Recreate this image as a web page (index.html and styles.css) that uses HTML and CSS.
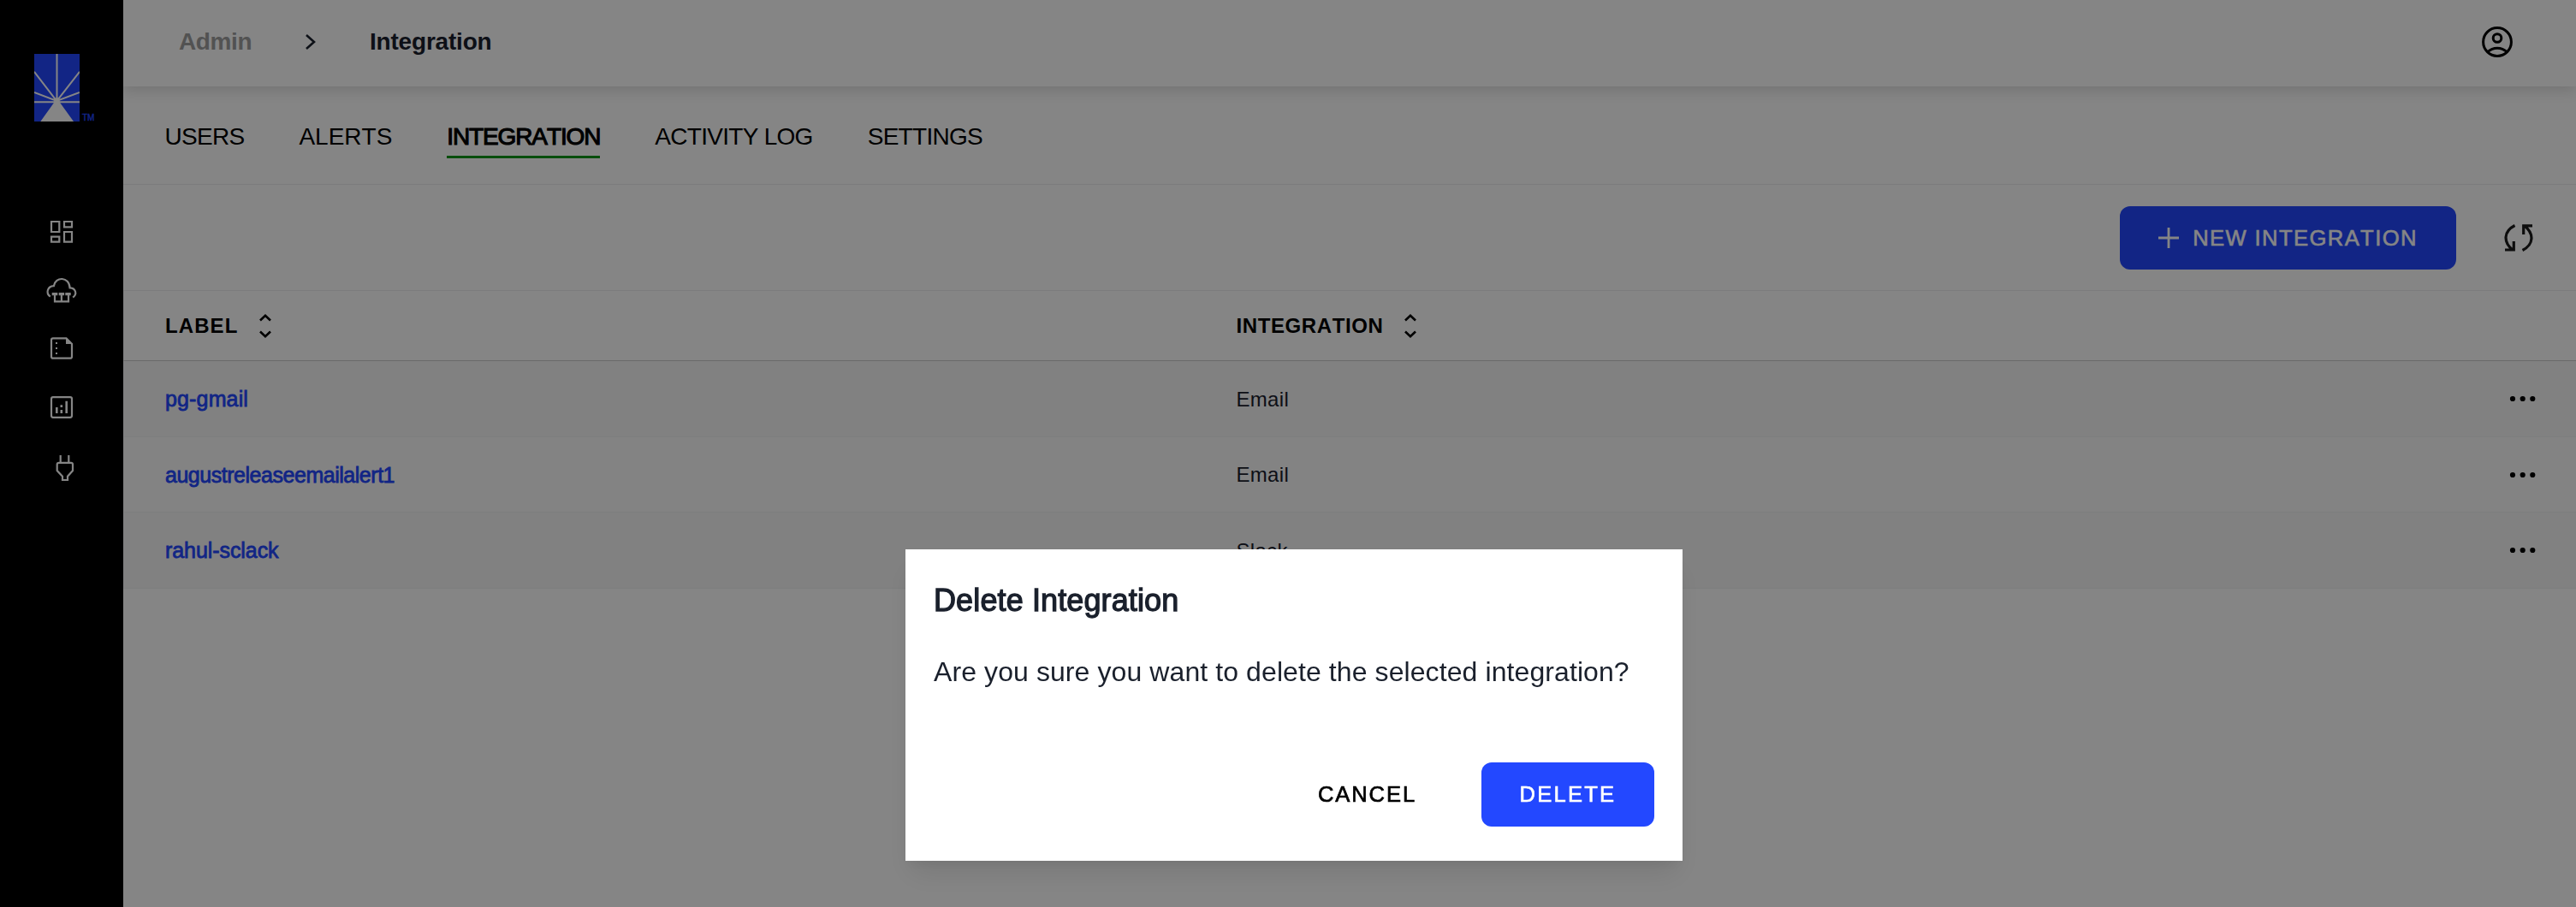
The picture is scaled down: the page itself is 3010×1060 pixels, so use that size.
FILE: index.html
```html
<!DOCTYPE html>
<html lang="en">
<head>
<meta charset="utf-8">
<title>Integration</title>
<link rel="stylesheet" href="styles.css">
</head>
<body>
<div class="app">
  <aside class="sidebar">
    <div class="logo">
      <svg width="53" height="79" viewBox="0 0 53 79">
        <rect width="53" height="79" fill="#2348ff"/>
        <g stroke="#fff" stroke-width="2" fill="none">
          <path d="M26.5 0V55M0 20.8L26.3 55L53 20.8M0 45L26.3 55L53 45M0 56.3H53"/>
        </g>
        <path d="M24 52L26.5 51L28.8 52L30.5 57.5L46 79H7.3L22.7 57.5Z" fill="#fff"/>
      </svg>
      <span class="logo-mark">TM</span>
    </div>
    <nav class="side-nav">
      <svg class="nav-icon" viewBox="0 0 68 68"><path d="M22 22h9.3v12H22zM37 22h9v6.3h-9zM22 39.7h9.3v6H22zM37 34h9v11.7h-9z"/></svg>
      <svg class="nav-icon" viewBox="0 0 68 68"><path d="M20.8 41.7C15 37.5 17.5 29.6 24.9 29.2C26.5 17.8 43 18 43.6 31.4C50.5 31.7 52.5 38.5 47.2 42.6M26 39V47.3H42V39M33.9 39V47"/><path class="solid" d="M22.7 37h6.6v3.2h-6.6zM30.7 37h6.4v3.2h-6.4zM38.3 37h6.4v3.2h-6.4z"/></svg>
      <svg class="nav-icon" viewBox="0 0 68 68"><path d="M24 22.3H39.5L46 29V43.7Q46 45.7 44 45.7H24Q22 45.7 22 43.7V24.3Q22 22.3 24 22.3Z"/><path class="solid" d="M39 22v7h7zM27 27h2v2h-2zM27 33h2v2h-2zM27 39h2v2h-2z"/></svg>
      <svg class="nav-icon" viewBox="0 0 68 68"><rect x="22" y="23.2" width="24" height="23.6" rx="2"/><path class="solid" d="M27 35h2.6v7H27zM32.5 32.3h2.6v2.6h-2.6zM32.5 38h2.6v4h-2.6zM38.4 27.7H41V42h-2.6z"/></svg>
      <svg class="nav-icon" viewBox="0 0 68 68"><path d="M32.7 23v8.8M42.3 23v8.8M31 31.8H45Q47 31.8 47 33.8V41L41 47.7V52H35V47.7L28.7 41V33.8Q28.7 31.8 31 31.8Z"/></svg>
    </nav>
  </aside>

  <main class="main">
    <header class="topbar">
      <div class="crumbs">
        <span class="crumb crumb-parent">Admin</span>
        <svg class="crumb-sep" width="12" height="18" viewBox="0 0 12 18"><path d="M1 1L10 9L1 17"/></svg>
        <span class="crumb crumb-current">Integration</span>
      </div>
      <svg class="user" width="36" height="36" viewBox="0 0 36 36"><circle cx="18" cy="18" r="16.4"/><circle cx="18" cy="13.5" r="4.8"/><path d="M7 29.5C13 23.8 23 23.8 29 29.5"/></svg>
    </header>

    <nav class="tabs">
      <a class="tab">USERS</a>
      <a class="tab tab-alerts">ALERTS</a>
      <a class="tab tab-active">INTEGRATION</a>
      <a class="tab">ACTIVITY LOG</a>
      <a class="tab">SETTINGS</a>
    </nav>

    <div class="toolbar">
      <button class="btn btn-primary btn-new">
        <svg width="24" height="24" viewBox="0 0 24 24"><path d="M12 0V24M0 12H24"/></svg>
        <span>NEW INTEGRATION</span>
      </button>
      <svg class="refresh" width="34" height="34" viewBox="0 0 34 34"><path d="M12.5 2.5C-1 9.5 -1 22 10 31M1 31H11.3V21M21.5 31.5C35 24.5 35 12 24 3M33 2.8H22.7V13"/></svg>
    </div>

    <section class="table">
      <div class="row row-head">
        <div class="cell cell-label">LABEL<svg class="sort" width="14" height="28" viewBox="0 0 14 28"><path d="M1 7.5L7 1.8L13 7.5M1 20.5L7 26.2L13 20.5"/></svg></div>
        <div class="cell cell-type">INTEGRATION<svg class="sort" width="14" height="28" viewBox="0 0 14 28"><path d="M1 7.5L7 1.8L13 7.5M1 20.5L7 26.2L13 20.5"/></svg></div>
      </div>
      <div class="row row-odd">
        <div class="cell"><a class="link">pg-gmail</a></div>
        <div class="cell">Email</div>
        <svg class="more" width="32" height="8" viewBox="0 0 32 8"><circle cx="4" cy="4" r="3.1"/><circle cx="15.7" cy="4" r="3.1"/><circle cx="27.3" cy="4" r="3.1"/></svg>
      </div>
      <div class="row row-even">
        <div class="cell"><a class="link link-long">augustreleaseemailalert1</a></div>
        <div class="cell">Email</div>
        <svg class="more" width="32" height="8" viewBox="0 0 32 8"><circle cx="4" cy="4" r="3.1"/><circle cx="15.7" cy="4" r="3.1"/><circle cx="27.3" cy="4" r="3.1"/></svg>
      </div>
      <div class="row row-odd">
        <div class="cell"><a class="link link-mid">rahul-sclack</a></div>
        <div class="cell">Slack</div>
        <svg class="more" width="32" height="8" viewBox="0 0 32 8"><circle cx="4" cy="4" r="3.1"/><circle cx="15.7" cy="4" r="3.1"/><circle cx="27.3" cy="4" r="3.1"/></svg>
      </div>
    </section>
  </main>
</div>

<div class="overlay">
  <div class="modal" role="dialog">
    <h2 class="modal-title">Delete Integration</h2>
    <p class="modal-text">Are you sure you want to delete the selected integration?</p>
    <div class="modal-actions">
      <button class="btn btn-ghost">CANCEL</button>
      <button class="btn btn-primary btn-delete">DELETE</button>
    </div>
  </div>
</div>
</body>
</html>
```
FILE: styles.css
```css
* { box-sizing: border-box; }

body {
  margin: 0;
  overflow: hidden;
  background: #fff;
  color: #1a202c;
  font-family: "Liberation Sans", Arial, sans-serif;
  font-kerning: none;
}

.app { display: flex; height: 1060px; }

/* Sidebar */
.sidebar { flex: 0 0 144px; background: #000; padding-top: 62.5px; }
.logo { display: flex; align-items: flex-end; gap: 3px; height: 79px; margin-left: 40px; }
.logo-mark { color: #2348ff; font-size: 10px; line-height: 8px; -webkit-text-stroke: .4px #2348ff; }
.side-nav { display: flex; flex-direction: column; margin: 95.5px 0 0 38px; }
.nav-icon { width: 68px; height: 68px; fill: none; stroke: #fff; stroke-width: 2.2; }
.nav-icon .solid { fill: #fff; stroke: none; }

/* Top bar */
.main { flex: 1; min-width: 0; }
.topbar {
  display: flex;
  align-items: center;
  justify-content: space-between;
  height: 101px;
  padding: 0 74px 4px 65px;
  box-shadow: 0 6px 14px rgba(0, 0, 0, .12);
}
.crumbs { display: flex; align-items: center; }
.crumb { font-size: 28px; font-weight: 700; line-height: 34px; }
.crumb-parent { width: 148px; color: #9e9e9e; letter-spacing: -.4px; }
.crumb-current { margin-left: 63px; letter-spacing: -.2px; }
.crumb-sep { fill: none; stroke: #1a202c; stroke-width: 2.6; }
.user { fill: none; stroke: #000; stroke-width: 3; }

/* Tabs */
.tabs {
  display: flex;
  align-items: flex-start;
  gap: 64px;
  height: 115px;
  padding: 36px 0 0 48.5px;
  border-bottom: 1px solid #edeeef;
}
.tab { color: #000; font-size: 28px; line-height: 45px; letter-spacing: -.71px; border-bottom: 3px solid transparent; }
.tab-alerts { letter-spacing: 0; }
.tab-active { letter-spacing: -1.13px; border-color: #109618; -webkit-text-stroke: 1.1px #000; }

/* Toolbar */
.toolbar {
  display: flex;
  align-items: center;
  justify-content: flex-end;
  gap: 56px;
  height: 124px;
  padding: 1px 50px 0 0;
  border-bottom: 1px solid #edeeef;
}
.btn {
  display: flex;
  align-items: center;
  justify-content: center;
  padding: 0;
  border: 0;
  border-radius: 12px;
  font: 25.6px "Liberation Sans", Arial, sans-serif;
  font-kerning: none;
}
.btn-primary { background: #2348ff; color: #fff; -webkit-text-stroke: .6px #fff; }
.btn-new { width: 393px; height: 74px; letter-spacing: 1.4px; gap: 16px; }
.btn-new svg { stroke: #fff; stroke-width: 2.8; }
.refresh { fill: none; stroke: #1a1a1a; stroke-width: 3.2; }

/* Table */
.row {
  display: grid;
  grid-template-columns: 1251.5px 1fr auto;
  align-items: center;
  height: 89px;
  padding: 0 46px 0 48px;
  border-left: 1px solid #f3f4f5;
  border-bottom: 1px solid #f0f1f2;
  font-size: 24px;
}
.cell { display: flex; align-items: center; padding-top: 1px; letter-spacing: .3px; }
.row-head { height: 82px; border-bottom-color: #cbcbcb; color: #000; font-weight: 700; }
.row-head .cell-label { letter-spacing: 1.1px; }
.row-head .cell-type { letter-spacing: .6px; }
.sort { margin-left: 25px; fill: none; stroke: #000; stroke-width: 2.6; }
.cell-label .sort { margin-left: 24px; }
.row-odd { background: #f7f7f7; }
.row-even { height: 88px; background: #fbfbfb; }
.link { color: #2348ff; font-size: 25px; letter-spacing: .15px; -webkit-text-stroke: .8px #2348ff; }
.link-long { letter-spacing: -.47px; }
.link-mid { letter-spacing: -.07px; }
.more { fill: #000; }

/* Dialog */
.overlay {
  position: fixed;
  inset: 0;
  display: flex;
  align-items: flex-start;
  justify-content: center;
  padding: 642px 0 0 14px;
  background: rgba(0, 0, 0, .48);
}
.modal {
  width: 908px;
  height: 364px;
  padding: 40px 33px;
  background: #fff;
  box-shadow: 0 20px 30px -6px rgba(0, 0, 0, .1), 0 8px 12px -4px rgba(0, 0, 0, .05);
}
.modal-title { margin: 0; font-size: 36px; font-weight: 400; line-height: 40px; letter-spacing: .12px; -webkit-text-stroke: 1.3px #1a202c; }
.modal-text { margin: 43px 0 0; font-size: 32px; line-height: 40px; letter-spacing: .09px; white-space: nowrap; }
.modal-actions { display: flex; justify-content: flex-end; gap: 30px; margin-top: 86px; }
.btn-ghost { width: 207px; height: 75px; background: none; color: #000; letter-spacing: 1.9px; -webkit-text-stroke: .7px #000; }
.btn-delete { width: 202px; height: 75px; letter-spacing: 2.2px; }
```
